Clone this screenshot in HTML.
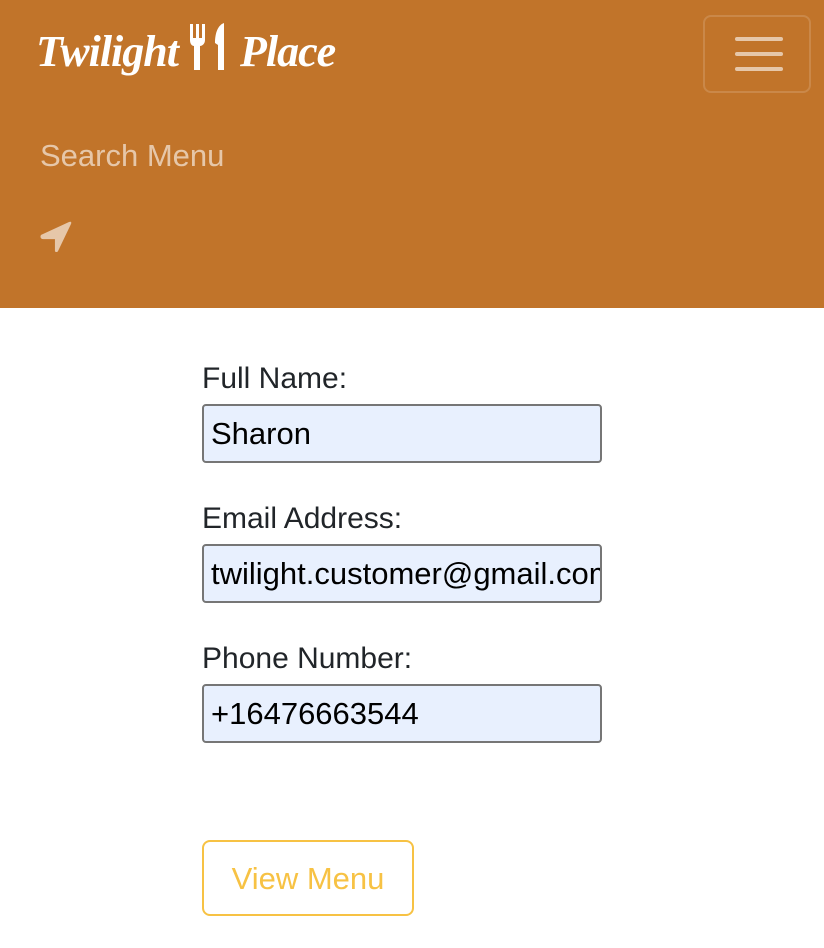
<!DOCTYPE html>
<html><head><meta charset="utf-8"><style>
body{margin:0;width:824px;height:948px;background:#fff;font-family:"Liberation Sans",sans-serif;overflow:hidden;position:relative}
.nav{position:absolute;left:0;top:0;width:824px;height:308px;background:#c1742a}
.logo{position:absolute;left:36px;top:22px;color:#fff;font-family:"Liberation Serif",serif;font-style:italic;font-weight:bold;font-size:44px;white-space:nowrap;letter-spacing:-1px}
.burger{position:absolute;left:703px;top:15px;width:108px;height:78px;border:2px solid rgba(255,255,255,.15);border-radius:8px;box-sizing:border-box}
.burger i{position:absolute;left:30px;width:48px;height:4px;background:rgba(255,255,255,.6);border-radius:2px}
.search{position:absolute;left:40px;top:138px;color:rgba(255,255,255,.6);font-size:31px}
label{position:absolute;left:202px;font-size:30px;color:#212529}
.in{position:absolute;left:202px;width:400px;height:59px;box-sizing:border-box;border:2px solid #767676;border-radius:4px;background:#e8f0fe;font-size:31px;padding:10px 7px;overflow:hidden;white-space:nowrap;color:#000}
.btn{position:absolute;left:202px;top:840px;width:212px;height:76px;box-sizing:border-box;border:2px solid #f7c244;border-radius:8px;color:#f7c244;font-size:31px;text-align:center;line-height:74px}
</style></head><body>
<div class="nav">
<div class="logo">Twilight
<svg width="42" height="50" viewBox="0 0 42 50" style="vertical-align:-6px"><path d="M2 2h3v14h3V2h3v14h3V2h3v16c0 4-3 6-5 6v24h-6V24c-2 0-4-2-4-6z" fill="#fff"/><path d="M36 1c-6 2-9 10-9 20l3 2v25h6z" fill="#fff"/></svg>
Place</div>
<div class="burger"><i style="top:20px"></i><i style="top:35px"></i><i style="top:50px"></i></div>
<div class="search">Search Menu</div>
<svg style="position:absolute;left:39px;top:220px" width="34" height="34" viewBox="0 0 32 32"><path d="M2 14L28 2c2-1 3 0 2 2L18 29c-1 2-3 1-3 0V18H4c-3 0-3-3-2-4z" fill="rgba(255,255,255,.6)" stroke="rgba(255,255,255,.0)" stroke-linejoin="round"/></svg>
</div>
<label style="top:362px">Full Name:</label>
<div class="in" style="top:404px">Sharon</div>
<label style="top:502px">Email Address:</label>
<div class="in" style="top:544px">twilight.customer@gmail.com</div>
<label style="top:642px">Phone Number:</label>
<div class="in" style="top:684px">+16476663544</div>
<div class="btn">View Menu</div>
</body></html>
